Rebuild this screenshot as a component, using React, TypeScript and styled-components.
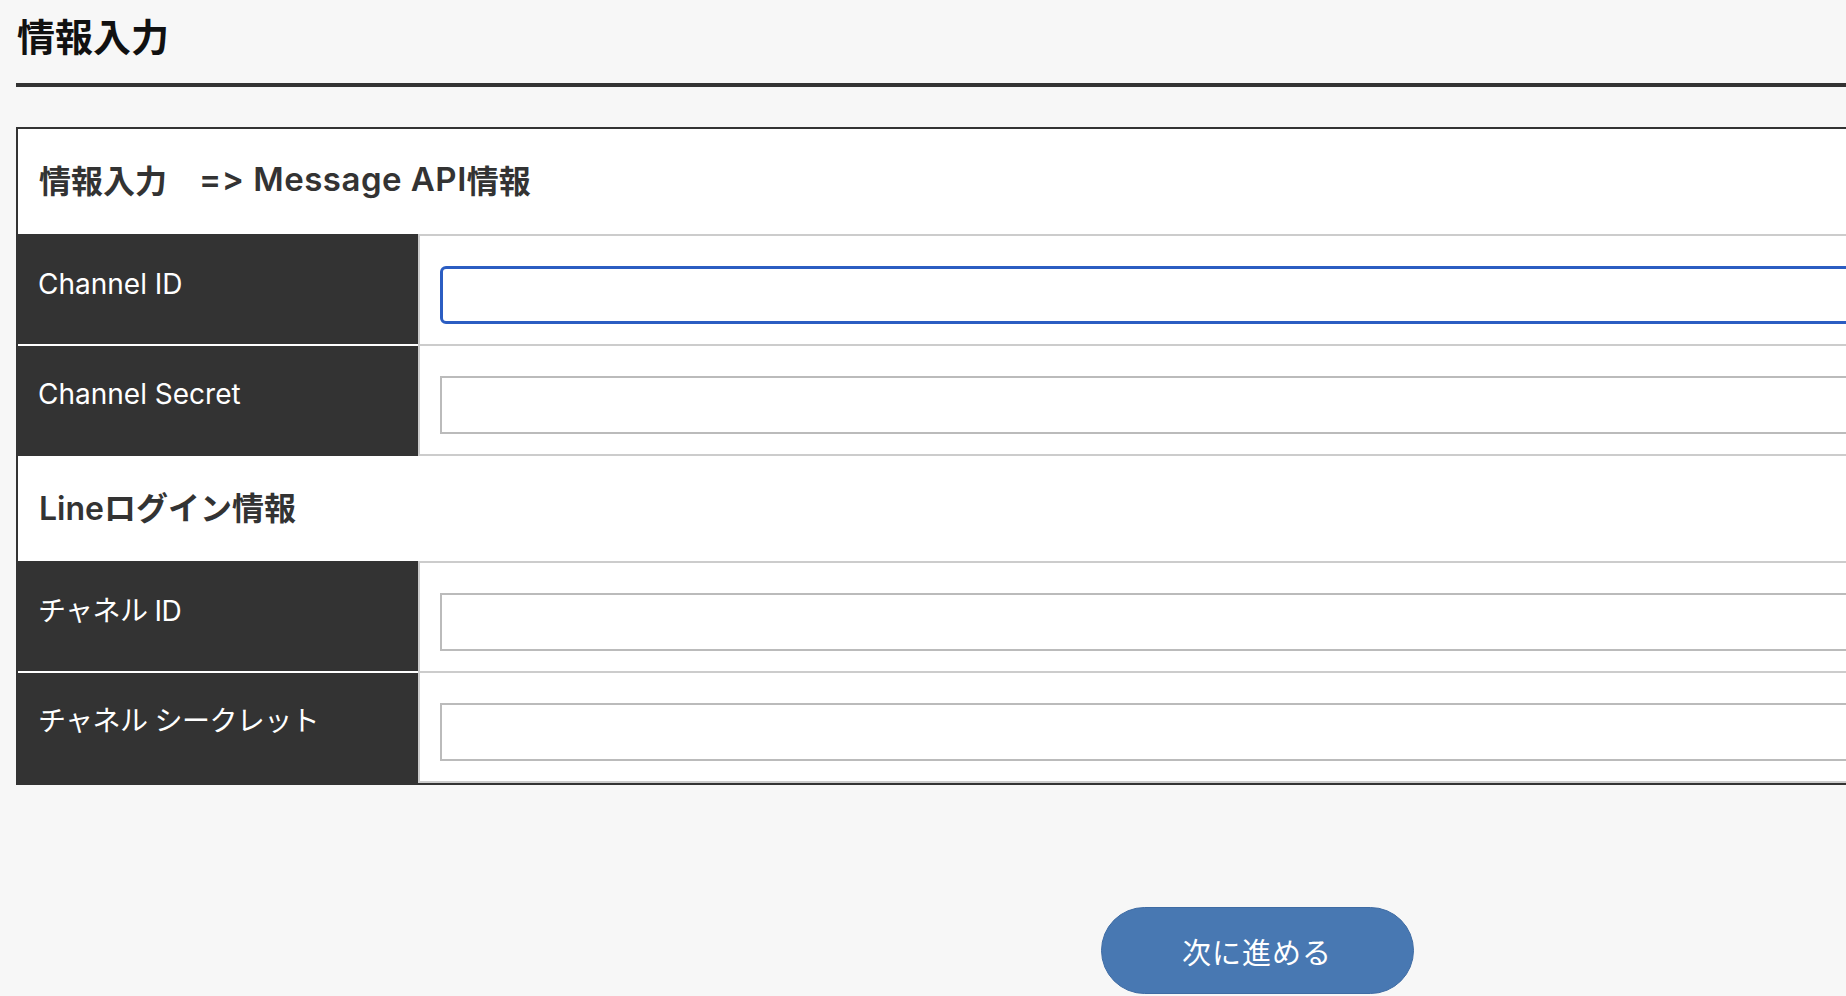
import React from "react";
import styled, { createGlobalStyle } from "styled-components";

const GlobalStyle = createGlobalStyle`
  html, body {
    margin: 0;
    padding: 0;
    background: #f7f7f7;
    overflow: hidden;
  }
  body {
    font-family: Inter, "Noto Sans CJK JP", sans-serif;
    font-feature-settings: "calt" 0, "liga" 0;
    color: #333;
  }
  *, *::before, *::after { box-sizing: border-box; }
`;

const Page = styled.div`
  width: 2482px;
  margin-left: 16px;
  display: flex;
  flex-direction: column;
`;

const Title = styled.h1`
  margin: 0;
  height: 83px;
  display: flex;
  align-items: center;
  padding: 0 0 15px 1px;
  font-size: 38px;
  font-weight: 700;
  color: #111;
`;

const Rule = styled.div`
  height: 4px;
  background: #333;
`;

const FormTable = styled.div`
  margin-top: 40px;
  background: #fff;
  border-top: 2px solid #333;
  border-left: 2px solid #333;
  border-bottom: 2px solid #333;
  display: flex;
  flex-direction: column;
`;

const SectionHead = styled.div`
  height: 105px;
  display: flex;
  align-items: center;
  padding: 0 0 6px 21px;
  font-size: 32px;
  font-weight: 600;
  color: #333;
  white-space: pre;
`;

const Latin = styled.span`
  font-size: 33px;
  letter-spacing: 0.5px;
`;

const FieldRow = styled.div`
  display: grid;
  grid-template-columns: 400px 1fr;
`;

const Label = styled.div<{ $first?: boolean; $jp?: boolean }>`
  background: #333;
  color: #fff;
  font-size: 28px;
  font-weight: 400;
  line-height: 42px;
  letter-spacing: ${(p) => (p.$jp ? "-0.6px" : "0")};
  padding: 27px 0 0 20px;
  border-top: 2px solid ${(p) => (p.$first ? "#333" : "#fff")};
`;

const ValueCell = styled.div<{ $last?: boolean }>`
  border-left: 2px solid #ccc;
  border-top: 2px solid #ccc;
  border-bottom: ${(p) => (p.$last ? "2px solid #ccc" : "none")};
  padding: 30px 0 20px 20px;
`;

const TextInput = styled.input<{ $focused?: boolean }>`
  display: block;
  width: 100%;
  height: 58px;
  margin: 0;
  padding: 0 12px;
  font-size: 28px;
  font-family: inherit;
  background: #fff;
  outline: none;
  border: ${(p) => (p.$focused ? "3px solid #2b5dc2" : "2px solid #bbb")};
  border-radius: ${(p) => (p.$focused ? "6px" : "0")};
`;

const NextButton = styled.button`
  align-self: center;
  margin-top: 122px;
  width: 313px;
  height: 87px;
  border-radius: 44px;
  background: #4878b2;
  border: 1px solid #3f6ca4;
  color: #fff;
  font-family: "Noto Sans CJK JP", sans-serif;
  font-size: 29px;
  font-weight: 400;
  letter-spacing: 1px;
  cursor: pointer;
`;

type Field = { label: string; focused?: boolean };

const isJapanese = (s: string) => /[^\x00-\x7F]/.test(s);

const Group: React.FC<{ title: React.ReactNode; fields: Field[] }> = ({ title, fields }) => (
  <>
    <SectionHead>{title}</SectionHead>
    {fields.map((f, i) => (
      <FieldRow key={f.label}>
        <Label $first={i === 0} $jp={isJapanese(f.label)}>
          {f.label}
        </Label>
        <ValueCell $last={i === fields.length - 1}>
          <TextInput type="text" $focused={f.focused} />
        </ValueCell>
      </FieldRow>
    ))}
  </>
);

export default function App() {
  return (
    <>
      <GlobalStyle />
      <Page>
        <Title>情報入力</Title>
        <Rule />
        <FormTable>
          <Group
            title={
              <>
                {"情報入力\u3000"}
                <Latin>=&gt; Message API</Latin>
                {"情報"}
              </>
            }
            fields={[{ label: "Channel ID", focused: true }, { label: "Channel Secret" }]}
          />
          <Group
            title="Lineログイン情報"
            fields={[{ label: "チャネル ID" }, { label: "チャネル シークレット" }]}
          />
        </FormTable>
        <NextButton type="button">次に進める</NextButton>
      </Page>
    </>
  );
}
